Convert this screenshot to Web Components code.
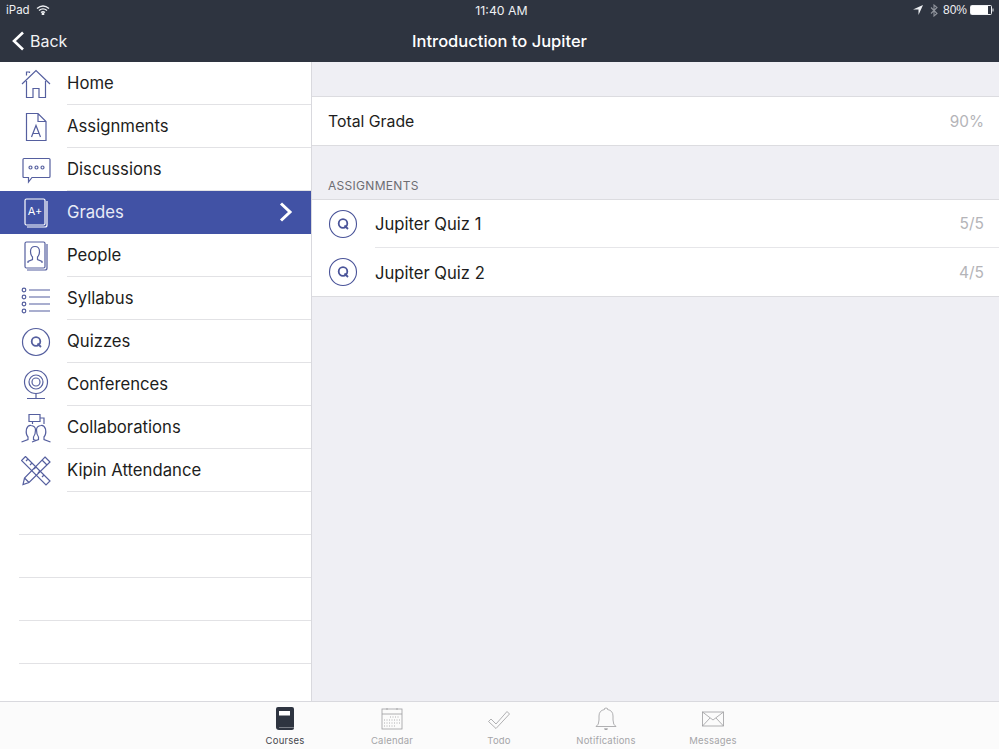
<!DOCTYPE html>
<html lang="en">
<head>
<meta charset="utf-8">
<title>Introduction to Jupiter</title>
<style>
  html, body { margin: 0; height: 100%; }
  body { font-family: Inter, "Liberation Sans", sans-serif; }
</style>
</head>
<body>
<canvas-app></canvas-app>
<script>
const icons = {
  home: `<svg viewBox="0 0 30 30"><path d="M1 15 15 1.500 29 15M5.500 6.500V3H8.500V4M5.500 12V28.500H12V19.500H18V28.500H24.500V12"/></svg>`,
  assignments: `<svg viewBox="0 0 30 30"><path d="M5.500 1.500H17L25 9.500V28.500H5.500ZM17 1.500V9.500H25M10.500 25 15 13.500 19.500 25M12 21.500H18"/></svg>`,
  discussions: `<svg viewBox="0 0 30 30"><path d="M3 3.500H28Q29 3.500 29 4.500V21.500Q29 22.500 28 22.500H11L7.500 27V22.500H3Q2 22.500 2 21.500V4.500Q2 3.500 3 3.500Z"/><circle cx="9.500" cy="12.500" r="1.500"/><circle cx="15.500" cy="12.500" r="1.500"/><circle cx="21.500" cy="12.500" r="1.500"/></svg>`,
  grades: `<svg viewBox="0 0 30 30"><rect x="4" y="1" width="20" height="26" rx="1.500"/><path d="M26 3V27Q26 29 24 29H6"/><text x="14" y="16.500" text-anchor="middle" font-family="Inter, sans-serif" font-size="11" stroke="none" fill="currentColor">A+</text></svg>`,
  people: `<svg viewBox="0 0 30 30"><rect x="4" y="1" width="20" height="26" rx="1.500"/><path d="M26 3V27Q26 29 24 29H6M7 22V20.500L11.500 18.500V16Q9.500 14 9.500 10.500 9.500 5.500 14 5.500T18.500 10.500Q18.500 14 16.500 16V18.500L21 20.500V22"/></svg>`,
  syllabus: `<svg viewBox="0 0 30 30"><circle cx="3" cy="6" r="1.800"/><circle cx="3" cy="13" r="1.800"/><circle cx="3" cy="20" r="1.800"/><circle cx="3" cy="27" r="1.800"/><path d="M8 6H29M8 13H29M8 20H29M8 27H29"/></svg>`,
  quizzes: `<svg viewBox="0 0 30 30"><circle cx="15" cy="15" r="13.500"/><circle cx="15" cy="14.500" r="4.300" stroke-width="1.800"/><path d="M16.500 16.500 20 20" stroke-width="1.800"/></svg>`,
  conferences: `<svg viewBox="0 0 30 30"><circle cx="15" cy="12" r="11.500"/><circle cx="15" cy="12" r="7"/><circle cx="15" cy="12" r="4"/><path d="M15 23.500V28.500M6 28.500H24"/></svg>`,
  collaborations: `<svg viewBox="0 0 30 30"><path d="M8 1.500H19V8.500H8ZM19 5H23V11M11.500 8.500V11"/><path d="M0.500 29 7 26.500V24Q4.500 21 5.500 16 7 12 10 12.500 14.500 13 14.500 17 14.500 21.500 12.500 24V26.500L15 27.500"/><path d="M29.500 29 23 26.500V24Q25.500 21 24.500 16 23 12 20 12.500 15.500 13 15.500 17 15.500 21.500 17.500 24V26.500L11 29"/></svg>`,
  kipin: `<svg viewBox="0 0 30 30"><path d="M4.500 .5 .5 4.500 25 29 29 25ZM5 5 7 3M9 9 11 7M13 13 15 11M17 17 19 15M21 21 23 19"/><path d="M24 1 29 6 8 26.500 2 28.500 3.500 22ZM21 4 26 9M3.500 22 8 26.500"/></svg>`,
  courses: `<svg viewBox="0 0 22 24"><path fill="#2e3440" stroke="none" d="M4 0H18Q20 0 20 2V21Q20 23 18 23H5Q2 23 2 20V2Q2 0 4 0Z"/><rect x="5" y="4" width="11" height="4.500" fill="#fff" stroke="none"/><path d="M5 20.500H20" stroke="#8b8f97"/></svg>`,
  calendar: `<svg viewBox="0 0 22 24"><rect x="1" y="2" width="20" height="20"/><path d="M1 7H21M6 1V3M16 1V3"/><path stroke-dasharray="1 1.500" d="M9 10H19M3 13H19M3 16H19M3 19H15"/></svg>`,
  todo: `<svg viewBox="0 0 22 24"><path d="M.5 14.500 3 12 8 17 19 4.500 21.500 7 8 21.500Z"/></svg>`,
  notifications: `<svg viewBox="0 0 22 24"><path d="M1 19.500Q4 18 4 13V9Q4 3.500 9.500 2.500V1.500Q11 .5 12.500 1.500V2.500Q18 3.500 18 9V13Q18 18 21 19.500Z"/><path d="M9.500 21.500Q11 23 12.500 21.500" stroke-width="1.500"/></svg>`,
  messages: `<svg viewBox="0 0 22 24"><rect x=".5" y="5" width="21" height="14"/><path d="M.5 5 11 13 21.500 5M.5 19 8 11M21.500 19 14 11"/></svg>`
};

class StatusBar extends HTMLElement {
  constructor() {
    super();
    this.attachShadow({mode: 'open'});
    this.shadowRoot.innerHTML = /* html */`
      <style>
        :host { display: grid; grid-template-columns: 1fr auto 1fr; align-items: center; height: 20px; padding: 0 5px 0 6px; color: #eef0f3; font-size: 11.500px; }
        .left { display: flex; align-items: center; gap: 6px; }
        .time { font-size: 12.300px; margin-left: 3px; }
        .right { display: flex; align-items: center; justify-content: flex-end; gap: 4px; }
        .pct { margin-left: 1px; font-family: "Liberation Sans", sans-serif; font-size: 12px; }
        svg { display: block; }
      </style>
      <div class="left">
        <span>iPad</span>
        <svg width="14" height="10" viewBox="0 0 14 10" fill="none" stroke="#eef0f3" stroke-width="1.400"><path d="M1 3.500Q7 -1.500 13 3.500M3 5.500Q7 2.200 11 5.500M5 7.500Q7 6 9 7.500"/><circle cx="7" cy="9" r=".7"/></svg>
      </div>
      <span class="time">11:40 AM</span>
      <div class="right">
        <svg width="10" height="10" viewBox="0 0 10 10" fill="#eef0f3"><path d="M10 0 5.500 10V4.500H0Z"/></svg>
        <svg style="margin-left:3px" width="8" height="13" viewBox="0 0 8 13" fill="none" stroke="#8f939b" stroke-width="1.100"><path d="M1 3.500 7 9.500 4 12V1L7 3.500 1 9.500"/></svg>
        <span class="pct">80%</span>
        <svg style="margin-left:-1px" width="24" height="10" viewBox="0 0 24 10"><rect x=".5" y=".5" width="21" height="9" rx="1" fill="none" stroke="#eef0f3"/><rect x="1" y="1" width="17" height="8" fill="#fff"/><path d="M22.500 3.500H23.500V6.500H22.500Z" fill="#eef0f3"/></svg>
      </div>
    `;
  }
}

class NavBar extends HTMLElement {
  constructor() {
    super();
    this.attachShadow({mode: 'open'});
    this.shadowRoot.innerHTML = /* html */`
      <style>
        :host { display: grid; grid-template-columns: 1fr auto 1fr; align-items: center; height: 42px; padding: 0 12px; color: #f2f3f5; }
        .back { display: flex; align-items: center; gap: 6px; font-size: 16px; }
        .title { font-size: 16.500px; font-weight: 500; color: #fff; }
        svg { display: block; }
      </style>
      <div class="back">
        <svg width="12" height="20" viewBox="0 0 12 20" fill="none" stroke="#fff" stroke-width="2.600"><path d="M11 1.500 2 10 11 18.500"/></svg>
        <span>Back</span>
      </div>
      <div class="title"><slot></slot></div>
    `;
  }
}

class MenuRow extends HTMLElement {
  static get observedAttributes() { return ['icon']; }
  constructor() {
    super();
    this.attachShadow({mode: 'open'});
    this.shadowRoot.innerHTML = /* html */`
      <style>
        :host { display: block; height: 43px; box-sizing: border-box; color: #1d1d20; font-size: 16.700px; }
        :host([selected]) { background: #4152a5; color: #e8ebf6; }
        .row { display: flex; align-items: center; height: 100%; box-sizing: border-box; }
        .icon { flex: none; display: flex; justify-content: center; width: 72px; margin-right: -5px; }
        .icon svg { display: block; width: 30px; height: 30px; fill: none; stroke: #555f9f; stroke-width: 1.200; }
        :host([selected]) .icon svg { stroke: #fff; color: #fff; }
        :host([blank]) .icon { width: 19px; margin-right: 0; }
        .label { flex: 1; align-self: stretch; display: flex; align-items: center; justify-content: space-between; padding-right: 18px; border-bottom: 1px solid #e2e2e5; }
        :host([selected]) .label { border-bottom-color: transparent; }
        .chevron { display: none; }
        :host([selected]) .chevron { display: block; }
      </style>
      <div class="row">
        <div class="icon"></div>
        <div class="label">
          <span><slot></slot></span>
          <svg class="chevron" width="14" height="20" viewBox="0 0 14 20" fill="none" stroke="#fff" stroke-width="3"><path d="M2 1.500 11 10 2 18.500"/></svg>
        </div>
      </div>
    `;
  }
  attributeChangedCallback(name, oldValue, value) {
    this.shadowRoot.querySelector('.icon').innerHTML = icons[value] || '';
  }
}

class SideMenu extends HTMLElement {
  constructor() {
    super();
    this.attachShadow({mode: 'open'});
    this.shadowRoot.innerHTML = /* html */`
      <style>
        :host { display: block; background: #fff; border-right: 1px solid #d9d9de; overflow: hidden; }
      </style>
      <slot></slot>
    `;
  }
}

class GradeRow extends HTMLElement {
  constructor() {
    super();
    this.attachShadow({mode: 'open'});
    this.shadowRoot.innerHTML = /* html */`
      <style>
        :host { display: flex; align-items: stretch; background: #fff; color: #1d1d20; font-size: 16.600px; height: 48px; }
        .icon { flex: none; width: 63px; display: flex; align-items: center; justify-content: center; }
        .icon svg { width: 30px; height: 30px; fill: none; stroke: #4a5499; stroke-width: 1.100; display: block; margin-right: 1px; }
        .body { flex: 1; display: flex; align-items: center; justify-content: space-between; padding: 1px 15px 0 0; }
        :host([line]) .body { padding-top: 0; border-bottom: 1px solid #e6e6e9; }
        .score { color: #b4b4b8; font-size: 15.500px; }
      </style>
      <div class="icon"></div>
      <div class="body">
        <span><slot></slot></span>
        <span class="score"></span>
      </div>
    `;
    this.shadowRoot.querySelector('.icon').innerHTML = icons.quizzes;
  }
  connectedCallback() {
    this.shadowRoot.querySelector('.score').textContent = this.getAttribute('score');
  }
}

class GradePanel extends HTMLElement {
  constructor() {
    super();
    this.attachShadow({mode: 'open'});
    this.shadowRoot.innerHTML = /* html */`
      <style>
        :host { display: block; background: #efeff4; padding-top: 34px; color: #1d1d20; }
        .total { display: flex; align-items: center; justify-content: space-between; height: 48px; padding: 0 15px 0 16px; background: #fff; border-top: 1px solid #dcdce0; border-bottom: 1px solid #dcdce0; font-size: 15.800px; }
        .total b { font-weight: 400; color: #b4b4b8; font-size: 15.300px; }
        h2 { margin: 0; padding: 33px 16px 6px; height: 14px; line-height: 14px; font-size: 12px; font-weight: 400; color: #6d6d72; letter-spacing: .3px; }
        .list { border-top: 1px solid #dcdce0; border-bottom: 1px solid #dcdce0; }
      </style>
      <div class="total"><span>Total Grade</span><b>90%</b></div>
      <h2>ASSIGNMENTS</h2>
      <div class="list"><slot></slot></div>
    `;
  }
}

class TabItem extends HTMLElement {
  static get observedAttributes() { return ['icon']; }
  constructor() {
    super();
    this.attachShadow({mode: 'open'});
    this.shadowRoot.innerHTML = /* html */`
      <style>
        :host { display: flex; flex-direction: column; align-items: center; width: 107px; color: #a5a5a8; font-size: 9.500px; letter-spacing: .2px; }
        :host([active]) { color: #45474d; }
        .icon svg { display: block; width: 22px; height: 24px; fill: none; stroke: #9d9da0; stroke-width: .8; }
        .icon { height: 24px; margin-top: 5px; margin-bottom: 4px; }
      </style>
      <div class="icon"></div>
      <span><slot></slot></span>
    `;
  }
  attributeChangedCallback(name, oldValue, value) {
    this.shadowRoot.querySelector('.icon').innerHTML = icons[value] || '';
  }
}

class TabBar extends HTMLElement {
  constructor() {
    super();
    this.attachShadow({mode: 'open'});
    this.shadowRoot.innerHTML = /* html */`
      <style>
        :host { display: flex; justify-content: center; padding-right: 1px; height: 48px; box-sizing: border-box; background: #fbfbfb; border-top: 1px solid #d9d9de; overflow: hidden; }
        .tabs { display: flex; }
      </style>
      <div class="tabs"><slot></slot></div>
    `;
  }
}

class CanvasApp extends HTMLElement {
  constructor() {
    super();
    this.attachShadow({mode: 'open'});
    const rows = [
      ['home', 'Home'], ['assignments', 'Assignments'], ['discussions', 'Discussions'],
      ['grades', 'Grades', true], ['people', 'People'], ['syllabus', 'Syllabus'],
      ['quizzes', 'Quizzes'], ['conferences', 'Conferences'], ['collaborations', 'Collaborations'],
      ['kipin', 'Kipin Attendance']
    ];
    const menu = rows.map(([icon, label, selected]) =>
      `<menu-row icon="${icon}"${selected ? ' selected' : ''}>${label}</menu-row>`).join('')
      + '<menu-row blank></menu-row>'.repeat(4);
    const tabs = [['courses', 'Courses', true], ['calendar', 'Calendar'], ['todo', 'Todo'], ['notifications', 'Notifications'], ['messages', 'Messages']];
    this.shadowRoot.innerHTML = /* html */`
      <style>
        :host { display: grid; grid-template-rows: 62px 1fr auto; height: 749px; width: 999px; overflow: hidden; }
        header { background: #2e3440; }
        .main { display: grid; grid-template-columns: 312px 1fr; min-height: 0; }
      </style>
      <header>
        <status-bar></status-bar>
        <nav-bar>Introduction to Jupiter</nav-bar>
      </header>
      <div class="main">
        <side-menu>${menu}</side-menu>
        <grade-panel>
          <grade-row score="5/5" line>Jupiter Quiz 1</grade-row>
          <grade-row score="4/5">Jupiter Quiz 2</grade-row>
        </grade-panel>
      </div>
      <tab-bar>${tabs.map(([icon, label, active]) => `<tab-item icon="${icon}"${active ? ' active' : ''}>${label}</tab-item>`).join('')}</tab-bar>
    `;
  }
}

customElements.define('status-bar', StatusBar);
customElements.define('nav-bar', NavBar);
customElements.define('menu-row', MenuRow);
customElements.define('side-menu', SideMenu);
customElements.define('grade-row', GradeRow);
customElements.define('grade-panel', GradePanel);
customElements.define('tab-item', TabItem);
customElements.define('tab-bar', TabBar);
customElements.define('canvas-app', CanvasApp);
</script>
</body>
</html>
